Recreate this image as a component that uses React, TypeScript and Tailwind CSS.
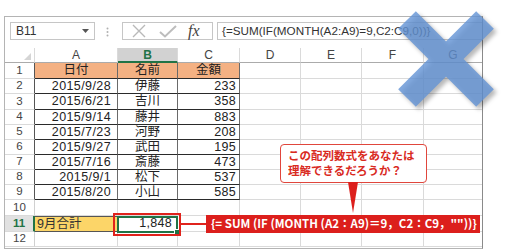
import React from 'react';

const W = ['w-[30px]', 'w-[83px]', 'w-[60px]', 'w-[62px]', 'w-[61px]', 'w-[61px]', 'w-[62px]', 'w-[58px]'];
const rowH = ['h-[16px]', 'h-[15px]', 'h-[16px]', 'h-[15px]', 'h-[15px]', 'h-[15px]', 'h-[15px]', 'h-[15px]', 'h-[15px]', 'h-[16px]', 'h-[16px]', 'h-[15px]'];

const data: [string, string, string][] = [
  ['2015/9/28', '伊藤', '233'],
  ['2015/6/21', '吉川', '358'],
  ['2015/9/14', '藤井', '883'],
  ['2015/7/23', '河野', '208'],
  ['2015/9/27', '武田', '195'],
  ['2015/7/16', '斎藤', '473'],
  ['2015/9/1', '松下', '537'],
  ['2015/8/20', '小山', '585'],
];

function Cell({ i, className = '', children }: { i: number; className?: string; children?: React.ReactNode }) {
  return (
    <div className={`${W[i]} shrink-0 h-full flex items-center border-b border-[#dadada] ${i < 7 ? 'border-r' : ''} ${className}`}>
      {children}
    </div>
  );
}

export default function App() {
  return (
    <div className="relative w-[506px] h-[251px] overflow-hidden bg-white pt-[16px] pl-[4px] text-[#222] [font-family:'Liberation_Sans','Noto_Sans_CJK_JP',sans-serif]">
      <div className="w-[479px] h-[233px] border-l border-t border-r border-b border-[#b4b4b4] border-r-[#8a8a8a]">
        {/* formula bar */}
        <div className="h-[31px] flex items-start pt-[5px] pl-[5px]">
          <div className="w-[85px] h-[18px] border border-[#c6c6c6] flex items-center pl-[5px] text-[12px] text-[#333]">
            B11
            <svg className="ml-auto mr-[5px]" width="7" height="4" viewBox="0 0 7 4">
              <polygon points="0,0 7,0 3.5,4" fill="#555" />
            </svg>
          </div>
          <svg className="ml-[11px] mt-[5px]" width="3" height="10" viewBox="0 0 3 10">
            <circle cx="1.5" cy="1.5" r="1" fill="#b0b0b0" />
            <circle cx="1.5" cy="5" r="1" fill="#b0b0b0" />
            <circle cx="1.5" cy="8.5" r="1" fill="#b0b0b0" />
          </svg>
          <div className="ml-[13px] w-[91px] h-[18px] border border-[#c6c6c6] flex items-center">
            <svg className="ml-[8px]" width="16" height="14" viewBox="0 0 16 14">
              <path d="M2 1 L14 13 M14 1 L2 13" stroke="#b9b9b9" strokeWidth="1.4" fill="none" />
            </svg>
            <svg className="ml-[12px]" width="18" height="14" viewBox="0 0 18 14">
              <path d="M1 8 L6 12.5 L17 2" stroke="#bdbdbd" strokeWidth="2" fill="none" />
            </svg>
            <span className="ml-[11px] text-[16px] leading-none italic text-[#444] [font-family:'Liberation_Serif',serif]">fx</span>
          </div>
          <div className="ml-[4px] flex-1 h-[18px] border-t border-b border-l border-[#c6c6c6] flex items-center pl-[4px] text-[11.7px] text-[#333] whitespace-nowrap">
            {'{=SUM(IF(MONTH(A2:A9)=9,C2:C9,0))}'}
          </div>
        </div>

        {/* column headers */}
        <div className="flex h-[15px] text-[12px] text-[#444]">
          <Cell i={0} className="relative border-[#d0d0d0] border-b-[#ababab]">
            <svg className="absolute right-[3px] bottom-[2px]" width="7" height="7" viewBox="0 0 7 7">
              <polygon points="7,0 7,7 0,7" fill="#d5d5d5" />
            </svg>
          </Cell>
          {['A', 'B', 'C', 'D', 'E', 'F', 'G'].map((c, j) => (
            <Cell
              key={c}
              i={j + 1}
              className={`justify-center border-[#d4d4d4] ${c === 'B' ? 'bg-[#d2d2d2] text-[#217346] font-bold border-b-2 border-b-[#217346]' : 'border-b-[#ababab]'}`}
            >
              {c}
            </Cell>
          ))}
        </div>

        {/* rows */}
        {rowH.map((h, r) => {
          const n = r + 1;
          const inTable = n <= 9;
          const tb = inTable ? 'border-b-[#2a2a2a] border-r-[#6a6a6a]' : '';
          const d = n >= 2 && n <= 9 ? data[n - 2] : null;
          return (
            <div key={n} className={`flex ${h} text-[12.5px]`}>
              <Cell
                i={0}
                className={`justify-center text-[11.5px] ${n === 11 ? 'bg-[#e1e1e1] text-[#217346] font-bold border-r-[#217346] border-r-2' : 'text-[#444]'} ${inTable || n === 11 ? 'border-r-[#555]' : 'border-r-[#d0d0d0]'}`}
              >
                {n}
              </Cell>
              {n === 1 && (
                <>
                  <Cell i={1} className={`justify-center bg-[#f4b183] ${tb}`}>日付</Cell>
                  <Cell i={2} className={`justify-center bg-[#f4b183] ${tb}`}>名前</Cell>
                  <Cell i={3} className={`justify-center bg-[#f4b183] ${tb}`}>金額</Cell>
                </>
              )}
              {d && (
                <>
                  <Cell i={1} className={`justify-end pr-[6px] tracking-[0.4px] ${tb}`}>{d[0]}</Cell>
                  <Cell i={2} className={`justify-center ${tb}`}>{d[1]}</Cell>
                  <Cell i={3} className={`justify-end pr-[3px] tracking-[0.3px] ${tb}`}>{d[2]}</Cell>
                </>
              )}
              {n === 11 && (
                <>
                  <Cell i={1} className="pl-[2px] bg-[#fcd568] border-b-[#555] border-r-[#555] border-t border-t-[#555] text-[#333]">9月合計</Cell>
                  <Cell i={2} className="justify-end pr-[5px] tracking-[0.3px]">1,848</Cell>
                  <Cell i={3} />
                </>
              )}
              {n >= 10 && n !== 11 && (
                <>
                  <Cell i={1} />
                  <Cell i={2} />
                  <Cell i={3} />
                </>
              )}
              <Cell i={4} />
              <Cell i={5} />
              <Cell i={6} />
              <Cell i={7} />
            </div>
          );
        })}
      </div>

      {/* selection of B11 */}
      <div className="absolute left-[117px] top-[216px] w-[61px] h-[17px] border-2 border-[#217346]">
        <div className="absolute right-[-4px] bottom-[-4px] w-[6px] h-[6px] bg-[#217346] border border-white" />
      </div>
      {/* red annotation box */}
      <div className="absolute left-[113px] top-[213px] w-[68px] h-[23px] border-2 border-[#e0231c]" />
      <div className="absolute left-[181px] top-[223px] w-[26px] h-[2px] bg-[#e0231c]" />
      <div className="absolute left-[206px] top-[215px] w-[274px] h-[18px] bg-[#dc1f1c] flex items-center pl-[5px] text-white font-bold text-[11.5px] whitespace-nowrap [font-family:'Noto_Sans_CJK_JP',sans-serif]">
        {'{= SUM (IF (MONTH (A2：A9)＝9，C2：C9，""))}'}
      </div>

      {/* callout */}
      <div className="absolute left-[280px] top-[144px] w-[147px] h-[39px] bg-white border border-[#e0463c] rounded-[4px] pl-[7px] pt-[3px] text-[#d92b1f] font-bold text-[11.5px] [font-family:'Noto_Sans_CJK_JP',sans-serif]">
        <div className="h-[15px] leading-[15px] overflow-hidden">この配列数式をあなたは</div>
        <div className="h-[15px] leading-[15px] overflow-hidden">理解できるだろうか？</div>
      </div>
      <svg className="absolute left-[347px] top-[182px]" width="12" height="32" viewBox="0 0 12 32">
        <polygon points="1,0 11,0 6,31" fill="#dc1f1c" />
      </svg>

      {/* big X */}
      <svg className="absolute left-[392px] top-[6px] drop-shadow-[3px_3px_2px_rgba(0,0,0,0.35)]" width="110" height="110" viewBox="0 0 110 110">
        <g opacity="0.8">
          <path d="M15 14 L93 92 M93 14 L15 92" stroke="#6393d6" strokeWidth="25" fill="none" />
        </g>
      </svg>
    </div>
  );
}
